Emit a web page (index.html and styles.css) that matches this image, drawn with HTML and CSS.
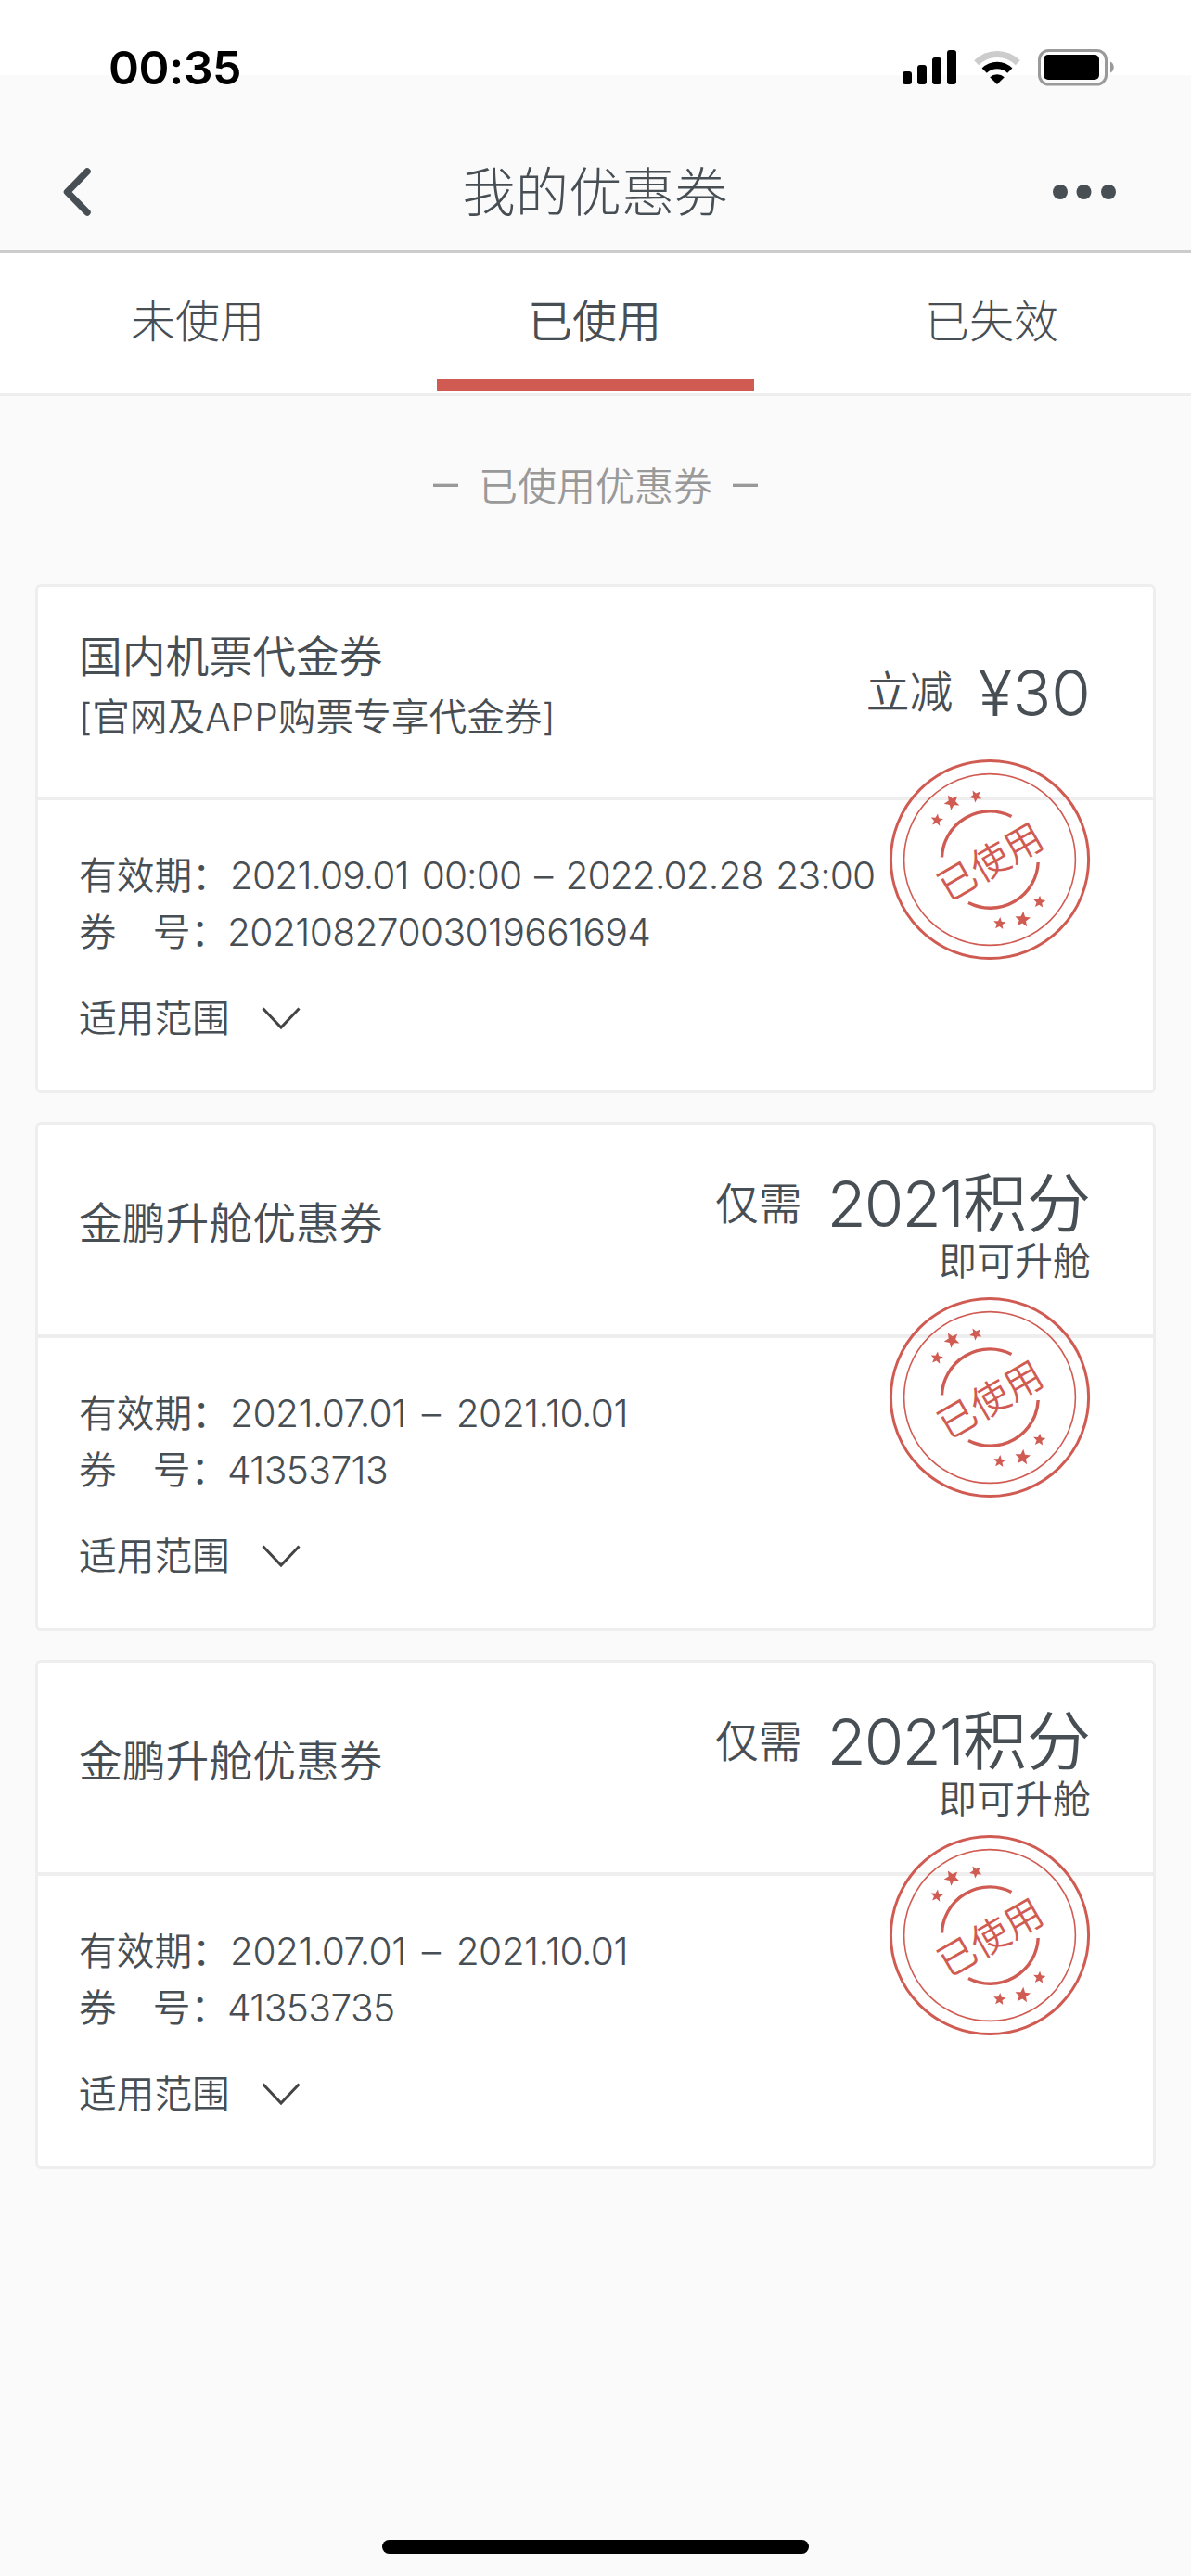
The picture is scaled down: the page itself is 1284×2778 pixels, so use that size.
FILE: index.html
```html
<!DOCTYPE html>
<html lang="zh-CN">
<head>
    <meta charset="UTF-8">
    <meta name="viewport" content="width=device-width, initial-scale=1.0">
    <title>我的优惠券</title>
    <link rel="stylesheet" href="styles.css">
</head>
<body>
    <!-- shared drawings, used by each coupon -->
    <svg class="defs" width="0" height="0">
        <defs>
            <polygon id="star" points="0,-10 2.6,-3.6 9.5,-3.1 4.2,1.4 5.9,8.1 0,4.4 -5.9,8.1 -4.2,1.4 -9.5,-3.1 -2.6,-3.6" />
            <symbol id="stamp" viewBox="0 0 218 218">
                <g fill="none" stroke="#d05b52">
                    <circle cx="109" cy="109" r="106.6" stroke-width="3" />
                    <circle cx="109" cy="109" r="92.4" stroke-width="1.6" />
                    <path d="M57.5 106.5 A51.6 51.6 0 0 1 132.5 62.5" stroke-width="3.4" />
                    <path d="M86 155.5 A51.6 51.6 0 0 0 161.2 112" stroke-width="3.4" />
                </g>
                <g fill="#d05b52">
                    <use href="#star" transform="translate(52 66.5) rotate(8) scale(0.7)" />
                    <use href="#star" transform="translate(68.3 47) rotate(-30) scale(0.88)" />
                    <use href="#star" transform="translate(94 40.6) rotate(-30) scale(0.7)" />
                    <use href="#star" transform="translate(162.5 154.6) rotate(5) scale(0.7)" />
                    <use href="#star" transform="translate(144.5 173.6) rotate(5) scale(0.88)" />
                    <use href="#star" transform="translate(119.7 178) rotate(5) scale(0.7)" />
                </g>
                <text class="stamp-text" x="109.5" y="126" text-anchor="middle" transform="rotate(-30 110 111)">已使用</text>
            </symbol>
        </defs>
    </svg>

    <div class="status-bar">
        <div class="time">00:35</div>
        <div class="status-icons">
            <svg width="58" height="38" viewBox="0 0 58 38">
                <rect x="0" y="24" width="10" height="14" rx="3" />
                <rect x="16" y="17" width="10" height="21" rx="3" />
                <rect x="32" y="9" width="10" height="29" rx="3" />
                <rect x="48" y="1" width="10" height="37" rx="3" />
            </svg>
            <svg width="52" height="38" viewBox="0 0 52 38">
                <path d="M3.7 14.7 A31.5 31.5 0 0 1 48.3 14.7" fill="none" stroke="#cccccc" stroke-width="7" />
                <path d="M12.2 23.2 A19.5 19.5 0 0 1 39.8 23.2" fill="none" stroke="#000000" stroke-width="7.4" />
                <path d="M18.2 30.2 A11.5 11.5 0 0 1 33.8 30.2 L26 38 Z" />
            </svg>
            <svg width="83" height="40" viewBox="0 0 83 40">
                <rect x="1.5" y="1.5" width="72" height="36.5" rx="10" fill="none" stroke="#9a9a9a" stroke-width="3" />
                <rect x="6" y="6" width="60" height="27" rx="5" />
                <path d="M78 13.5 C83 15.5 83 23.5 78 25.5 Z" fill="#9a9a9a" />
            </svg>
        </div>
    </div>

    <header class="header">
        <svg class="back" width="32" height="54" viewBox="0 0 32 54">
            <path d="M28 5 L6.5 27 L28 49" />
        </svg>
        <h1>我的优惠券</h1>
        <svg class="more" width="70" height="18" viewBox="0 0 70 18">
            <circle cx="9" cy="9" r="8" />
            <circle cx="34.5" cy="9" r="8" />
            <circle cx="61" cy="9" r="8" />
        </svg>
    </header>

    <nav class="tabs">
        <a class="tab">未使用</a>
        <a class="tab active">已使用</a>
        <a class="tab">已失效</a>
    </nav>

    <main class="list">
        <div class="list-title"><span>–</span>已使用优惠券<span>–</span></div>

        <section class="coupon">
            <div class="coupon-top">
                <div class="name">
                    <h2>国内机票代金券</h2>
                    <p>[官网及APP购票专享代金券]</p>
                </div>
                <div class="value">
                    <div class="amount"><span>立减</span><b>¥30</b></div>
                </div>
            </div>
            <div class="coupon-info">
                <p><span class="label">有效期：</span><span class="date with-time">2021.09.01 00:00 – 2022.02.28 23:00</span></p>
                <p><span class="label no"><span>券</span><span>号：</span></span><span class="number">20210827003019661694</span></p>
                <div class="scope">适用范围<svg width="42" height="26" viewBox="0 0 42 26"><path d="M1.5 1.5 L21 22 L40.5 1.5" /></svg></div>
            </div>
            <svg class="stamp" width="218" height="218"><use href="#stamp" /></svg>
        </section>

        <section class="coupon">
            <div class="coupon-top">
                <div class="name">
                    <h2>金鹏升舱优惠券</h2>
                </div>
                <div class="value">
                    <div class="amount"><span>仅需</span><b><span class="points">2021</span>积分</b></div>
                    <p>即可升舱</p>
                </div>
            </div>
            <div class="coupon-info">
                <p><span class="label">有效期：</span><span class="date">2021.07.01 – 2021.10.01</span></p>
                <p><span class="label no"><span>券</span><span>号：</span></span><span class="number">41353713</span></p>
                <div class="scope">适用范围<svg width="42" height="26" viewBox="0 0 42 26"><path d="M1.5 1.5 L21 22 L40.5 1.5" /></svg></div>
            </div>
            <svg class="stamp" width="218" height="218"><use href="#stamp" /></svg>
        </section>

        <section class="coupon">
            <div class="coupon-top">
                <div class="name">
                    <h2>金鹏升舱优惠券</h2>
                </div>
                <div class="value">
                    <div class="amount"><span>仅需</span><b><span class="points">2021</span>积分</b></div>
                    <p>即可升舱</p>
                </div>
            </div>
            <div class="coupon-info">
                <p><span class="label">有效期：</span><span class="date">2021.07.01 – 2021.10.01</span></p>
                <p><span class="label no"><span>券</span><span>号：</span></span><span class="number">41353735</span></p>
                <div class="scope">适用范围<svg width="42" height="26" viewBox="0 0 42 26"><path d="M1.5 1.5 L21 22 L40.5 1.5" /></svg></div>
            </div>
            <svg class="stamp" width="218" height="218"><use href="#stamp" /></svg>
        </section>
    </main>

    <footer class="home"><div class="home-bar"></div></footer>
</body>
</html>
```

FILE: styles.css
```css
* {
    box-sizing: border-box;
}

body {
    margin: 0;
    height: 2778px;
    display: flex;
    flex-direction: column;
    background-color: #fafafa;
    color: #474e54;
    font-family: Inter, "Noto Sans CJK SC", sans-serif;
    font-weight: 350;
}

h1, h2, p {
    margin: 0;
    font-weight: inherit;
}

svg {
    display: block;
    flex: none;
}

.defs {
    position: absolute;
}

/* status bar */
.status-bar {
    height: 81px;
    padding: 53px 82px 0 117px;
    display: flex;
    justify-content: space-between;
    align-items: flex-start;
    background-color: #ffffff;
    color: #000000;
}

.time {
    font-size: 50px;
    font-weight: 600;
    line-height: 40px;
    letter-spacing: -0.4px;
}

.status-icons {
    display: flex;
    gap: 18px;
}

/* header */
.header {
    height: 192px;
    padding: 62px 80px 0 66px;
    display: flex;
    justify-content: space-between;
    align-items: center;
    border-bottom: 3px solid #cccccc;
}

.header h1 {
    padding: 3px 0 0 51px;
    font-size: 57.2px;
    font-weight: 300;
    line-height: 80px;
}

.back path {
    fill: none;
    stroke: #474e54;
    stroke-width: 7.5;
    stroke-linecap: round;
    stroke-linejoin: round;
}

.more {
    fill: #474e54;
}

/* tabs */
.tabs {
    height: 154px;
    display: grid;
    grid-template-columns: repeat(3, 1fr);
    background-color: #ffffff;
    border-bottom: 3px solid #eeeeee;
}

.tab {
    position: relative;
    padding-right: 2px;
    font-size: 48px;
    font-weight: 300;
    line-height: 148px;
    text-align: center;
}

.tab.active {
    font-weight: 350;
}

.tab.active::after {
    content: "";
    position: absolute;
    left: 10%;
    right: 10%;
    bottom: 2px;
    height: 13px;
    background-color: #d05b52;
}

/* coupon list */
.list {
    flex: 1;
    padding: 0 38px;
}

.list-title {
    height: 194px;
    margin-bottom: 9px;
    padding-bottom: 6px;
    display: flex;
    justify-content: center;
    align-items: center;
    gap: 22px;
    color: #999999;
    font-size: 42px;
}

.list-title span {
    font-size: 54px;
    font-weight: 300;
    line-height: 60px;
}

.coupon {
    position: relative;
    height: 549px;
    margin-bottom: 31px;
    background-color: #ffffff;
    border: 3px solid #eeeeee;
    border-radius: 6px;
}

.coupon-top {
    height: 230px;
    padding: 0 67px 0 44px;
    display: flex;
    justify-content: space-between;
    align-items: center;
    border-bottom: 4px solid #eeeeee;
}

.name {
    padding-bottom: 15px;
}

.name h2 {
    font-size: 46.8px;
    line-height: 70px;
}

.name p {
    font-size: 40.7px;
    line-height: 61px;
}

.value {
    text-align: right;
}

.amount {
    display: flex;
    align-items: center;
    justify-content: flex-end;
    gap: 27px;
    font-size: 46.8px;
    line-height: 68px;
}

.amount b {
    padding-top: 1px;
    font-size: 69px;
    font-weight: 350;
}

.points {
    letter-spacing: -2px;
}

.value p {
    font-size: 41px;
    line-height: 57px;
}

.coupon-info {
    padding: 51px 44px 0;
    font-size: 40.7px;
    line-height: 61px;
}

.coupon-info p {
    display: flex;
}

.label {
    width: 163px;
}

.label.no {
    width: 160px;
    display: flex;
    gap: 39px;
}

.date {
    letter-spacing: -0.55px;
    word-spacing: 6.2px;
}

.date.with-time {
    letter-spacing: -0.9px;
    word-spacing: 3.4px;
}

.number {
    letter-spacing: -0.6px;
}

.scope {
    margin-top: 32px;
    display: flex;
    align-items: center;
    gap: 34px;
}

.scope path {
    fill: none;
    stroke: #444444;
    stroke-width: 3;
}

/* the stamp lies over both halves of the coupon */
.stamp {
    position: absolute;
    top: 185px;
    right: 67px;
}

.stamp-text {
    fill: #d05b52;
    font-size: 41px;
    font-weight: 350;
}

/* home indicator */
.home {
    height: 39px;
    display: flex;
    justify-content: center;
}

.home-bar {
    width: 460px;
    height: 15px;
    border-radius: 8px;
    background-color: #000000;
}
```
